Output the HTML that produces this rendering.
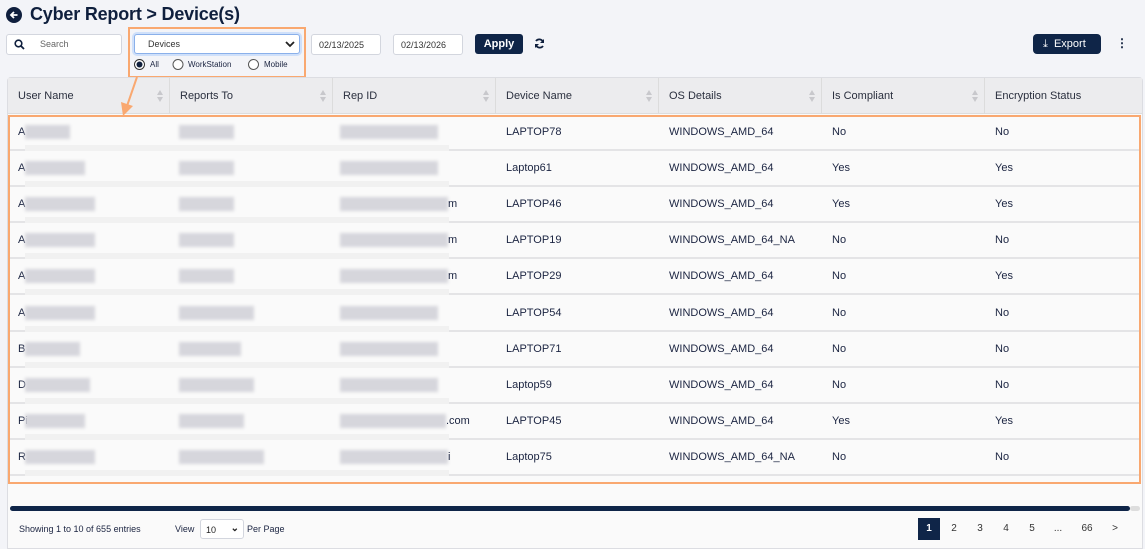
<!DOCTYPE html>
<html><head><meta charset="utf-8"><style>
*{box-sizing:border-box;margin:0;padding:0}
body{width:1145px;height:549px;background:#f3f4f8;font-family:"Liberation Sans",sans-serif;color:#1b2441;position:relative;overflow:hidden;font-size:11px}
.a{position:absolute}
.title{left:30px;top:4px;font-size:18px;font-weight:bold;color:#0f1f3d;letter-spacing:-0.2px}
.inp{background:#fff;border:1px solid #d3d6de;border-radius:3px;font-size:10px;color:#555}
.tbl{left:7px;top:77px;width:1136px;height:472px;background:#fafafa;border:1px solid #dcdde2;border-radius:4px 4px 0 0}
.hd{left:8px;top:78px;width:1134px;height:36px;background:#ececee;border-bottom:1px solid #ddd}
.hc{position:absolute;top:0;height:36px;line-height:36px;padding-left:10px;font-size:11px;border-right:1px solid #dcdcdc;color:#2a2f3e}
.sort{position:absolute;right:6px;top:11px;width:6px;height:14px}
.row{position:absolute;left:9px;width:1131px;height:36px;border-bottom:2px solid #e4e4e6;background:#fafafa}
.c{position:absolute;top:0;line-height:34px;font-size:11px;color:#1b2441}
.bl{position:absolute;top:10px;height:14px;background:#d6d6dc;filter:blur(1.5px)}
.band{position:absolute;top:30px;left:16px;width:424px;height:6px;background:#f1f1f1}
.pg{position:absolute;top:518px;width:22px;height:21px;line-height:21px;text-align:center;font-size:10px;color:#333}
</style></head><body>
<svg class="a" style="left:6px;top:7px" width="16" height="16" viewBox="0 0 16 16"><circle cx="8" cy="8" r="8" fill="#0f1f3d"/><path d="M11.5 8H5M8 5L5 8l3 3" stroke="#fff" stroke-width="1.8" fill="none"/></svg>
<div class="a title">Cyber Report &gt; Device(s)</div>
<div class="a inp" style="left:6px;top:34px;width:116px;height:21px"></div>
<svg class="a" style="left:14px;top:39px" width="11" height="11" viewBox="0 0 11 11"><circle cx="4.5" cy="4.5" r="3.3" stroke="#0f1f3d" stroke-width="1.6" fill="none"/><path d="M7 7l3 3" stroke="#0f1f3d" stroke-width="1.8"/></svg>
<div class="a" style="left:40px;top:39px;font-size:9px;color:#666">Search</div>
<div class="a" style="left:128px;top:27px;width:178px;height:51px;border:2px solid #f9a870"></div>
<div class="a inp" style="left:134px;top:34px;width:166px;height:20px;border:1px solid #8ab0ea;box-shadow:0 0 0 2px #cfe0fa"></div>
<div class="a" style="left:148px;top:39px;font-size:9px;color:#333">Devices</div>
<svg class="a" style="left:285px;top:40px" width="10" height="8" viewBox="0 0 10 8"><path d="M1 2l4 4 4-4" stroke="#222" stroke-width="1.8" fill="none"/></svg>
<svg class="a" style="left:133px;top:58px" width="170" height="13"><circle cx="6.5" cy="6.5" r="5" fill="#fff" stroke="#333"/><circle cx="6.5" cy="6.5" r="3" fill="#0f1f3d"/><circle cx="45" cy="6.5" r="5" fill="#fff" stroke="#555"/><circle cx="120.5" cy="6.5" r="5" fill="#fff" stroke="#555"/></svg>
<div class="a" style="left:150px;top:60px;font-size:8px">All</div>
<div class="a" style="left:188px;top:60px;font-size:8px">WorkStation</div>
<div class="a" style="left:264px;top:60px;font-size:8px">Mobile</div>
<div class="a inp" style="left:311px;top:34px;width:70px;height:21px;padding:5px 7px;font-size:9px;color:#333">02/13/2025</div>
<div class="a inp" style="left:393px;top:34px;width:70px;height:21px;padding:5px 7px;font-size:9px;color:#333">02/13/2026</div>
<div class="a" style="left:475px;top:34px;width:48px;height:20px;background:#0f2548;border-radius:3px;color:#fff;font-weight:bold;font-size:11px;text-align:center;line-height:20px">Apply</div>
<svg class="a" style="left:534px;top:38px" width="11" height="11" viewBox="0 0 11 11"><path d="M9 4A4 4 0 0 0 2 3M2 7a4 4 0 0 0 7 1" stroke="#0f1f3d" stroke-width="1.8" fill="none"/><path d="M10 1v4H6zM1 10V6h4z" fill="#0f1f3d"/></svg>
<div class="a" style="left:1033px;top:34px;width:68px;height:20px;background:#0f2548;border-radius:4px;color:#fff;font-size:11px;line-height:20px;padding-left:10px">&#x2913;&nbsp; Export</div>
<div class="a" style="left:1116px;top:36px;font-size:12px;font-weight:bold;color:#0f1f3d">&#8942;</div>
<div class="a tbl"></div>
<div class="a hd">
<div class="hc" style="left:0;width:162px">User Name<svg class="sort" viewBox="0 0 6 14"><path d="M3 1L6 6H0z M3 13L6 8H0z" fill="#c8c8cc"/></svg></div>
<div class="hc" style="left:162px;width:163px">Reports To<svg class="sort" viewBox="0 0 6 14"><path d="M3 1L6 6H0z M3 13L6 8H0z" fill="#c8c8cc"/></svg></div>
<div class="hc" style="left:325px;width:163px">Rep ID<svg class="sort" viewBox="0 0 6 14"><path d="M3 1L6 6H0z M3 13L6 8H0z" fill="#c8c8cc"/></svg></div>
<div class="hc" style="left:488px;width:163px">Device Name<svg class="sort" viewBox="0 0 6 14"><path d="M3 1L6 6H0z M3 13L6 8H0z" fill="#c8c8cc"/></svg></div>
<div class="hc" style="left:651px;width:163px">OS Details<svg class="sort" viewBox="0 0 6 14"><path d="M3 1L6 6H0z M3 13L6 8H0z" fill="#c8c8cc"/></svg></div>
<div class="hc" style="left:814px;width:163px">Is Compliant<svg class="sort" viewBox="0 0 6 14"><path d="M3 1L6 6H0z M3 13L6 8H0z" fill="#c8c8cc"/></svg></div>
<div class="hc" style="left:977px;width:157px;border-right:none">Encryption Status</div>
</div>
<div id="rows"></div>
<div class="a" style="left:8px;top:115px;width:1133px;height:369px;border:2px solid #f9a870"></div>
<svg class="a" style="left:115px;top:76px" width="30" height="42"><path d="M22 1L12 30" stroke="#f9a870" stroke-width="2"/><path d="M6 26l12 4-10 10z" fill="#f9a870"/></svg>
<div class="a" style="left:10px;top:506px;width:1120px;height:5px;background:#0f2548;border-radius:3px"></div>
<div class="a" style="left:1130px;top:506px;width:10px;height:5px;background:#ddd;border-radius:3px"></div>
<div class="a" style="left:19px;top:524px;font-size:9px">Showing 1 to 10 of 655 entries</div>
<div class="a" style="left:175px;top:524px;font-size:9px">View</div>
<div class="a inp" style="left:200px;top:519px;width:44px;height:20px;font-size:9px;color:#222;padding:5px 5px">10<span style="position:absolute;right:4px;top:3px;font-weight:bold;font-size:10px">&#8964;</span></div>
<div class="a" style="left:247px;top:524px;font-size:9px">Per Page</div>
<div class="pg" style="left:918px;background:#0f2548;color:#fff;font-weight:bold;height:22px">1</div>
<div class="pg" style="left:943px">2</div><div class="pg" style="left:969px">3</div><div class="pg" style="left:995px">4</div><div class="pg" style="left:1021px">5</div><div class="pg" style="left:1047px">...</div><div class="pg" style="left:1076px">66</div><div class="pg" style="left:1104px">&gt;</div>
<script>
var d=[["A",45,55,98,"","LAPTOP78","WINDOWS_AMD_64","No","No"],["A",60,55,98,"","Laptop61","WINDOWS_AMD_64","Yes","Yes"],["A",70,55,108,"m","LAPTOP46","WINDOWS_AMD_64","Yes","Yes"],["A",70,55,108,"m","LAPTOP19","WINDOWS_AMD_64_NA","No","No"],["A",70,55,108,"m","LAPTOP29","WINDOWS_AMD_64","No","Yes"],["A",70,75,98,"","LAPTOP54","WINDOWS_AMD_64","No","No"],["B",55,62,98,"","LAPTOP71","WINDOWS_AMD_64","No","No"],["D",65,75,98,"","Laptop59","WINDOWS_AMD_64","No","No"],["Pi",60,65,106,".com","LAPTOP45","WINDOWS_AMD_64","Yes","Yes"],["R",70,85,108,"i","Laptop75","WINDOWS_AMD_64_NA","No","No"]];
var h="";d.forEach(function(r,i){var t=115+i*36.1;h+='<div class="row" style="top:'+t+'px"><div class="band"></div><div class="c" style="left:9px">'+r[0]+'</div><div class="bl" style="left:16px;width:'+r[1]+'px"></div><div class="bl" style="left:170px;width:'+r[2]+'px"></div><div class="bl" style="left:331px;width:'+r[3]+'px"></div><div class="c" style="left:'+(331+r[3])+'px">'+r[4]+'</div><div class="c" style="left:497px">'+r[5]+'</div><div class="c" style="left:660px">'+r[6]+'</div><div class="c" style="left:823px">'+r[7]+'</div><div class="c" style="left:986px">'+r[8]+'</div></div>'});
document.getElementById("rows").innerHTML=h;
</script>
</body></html>
